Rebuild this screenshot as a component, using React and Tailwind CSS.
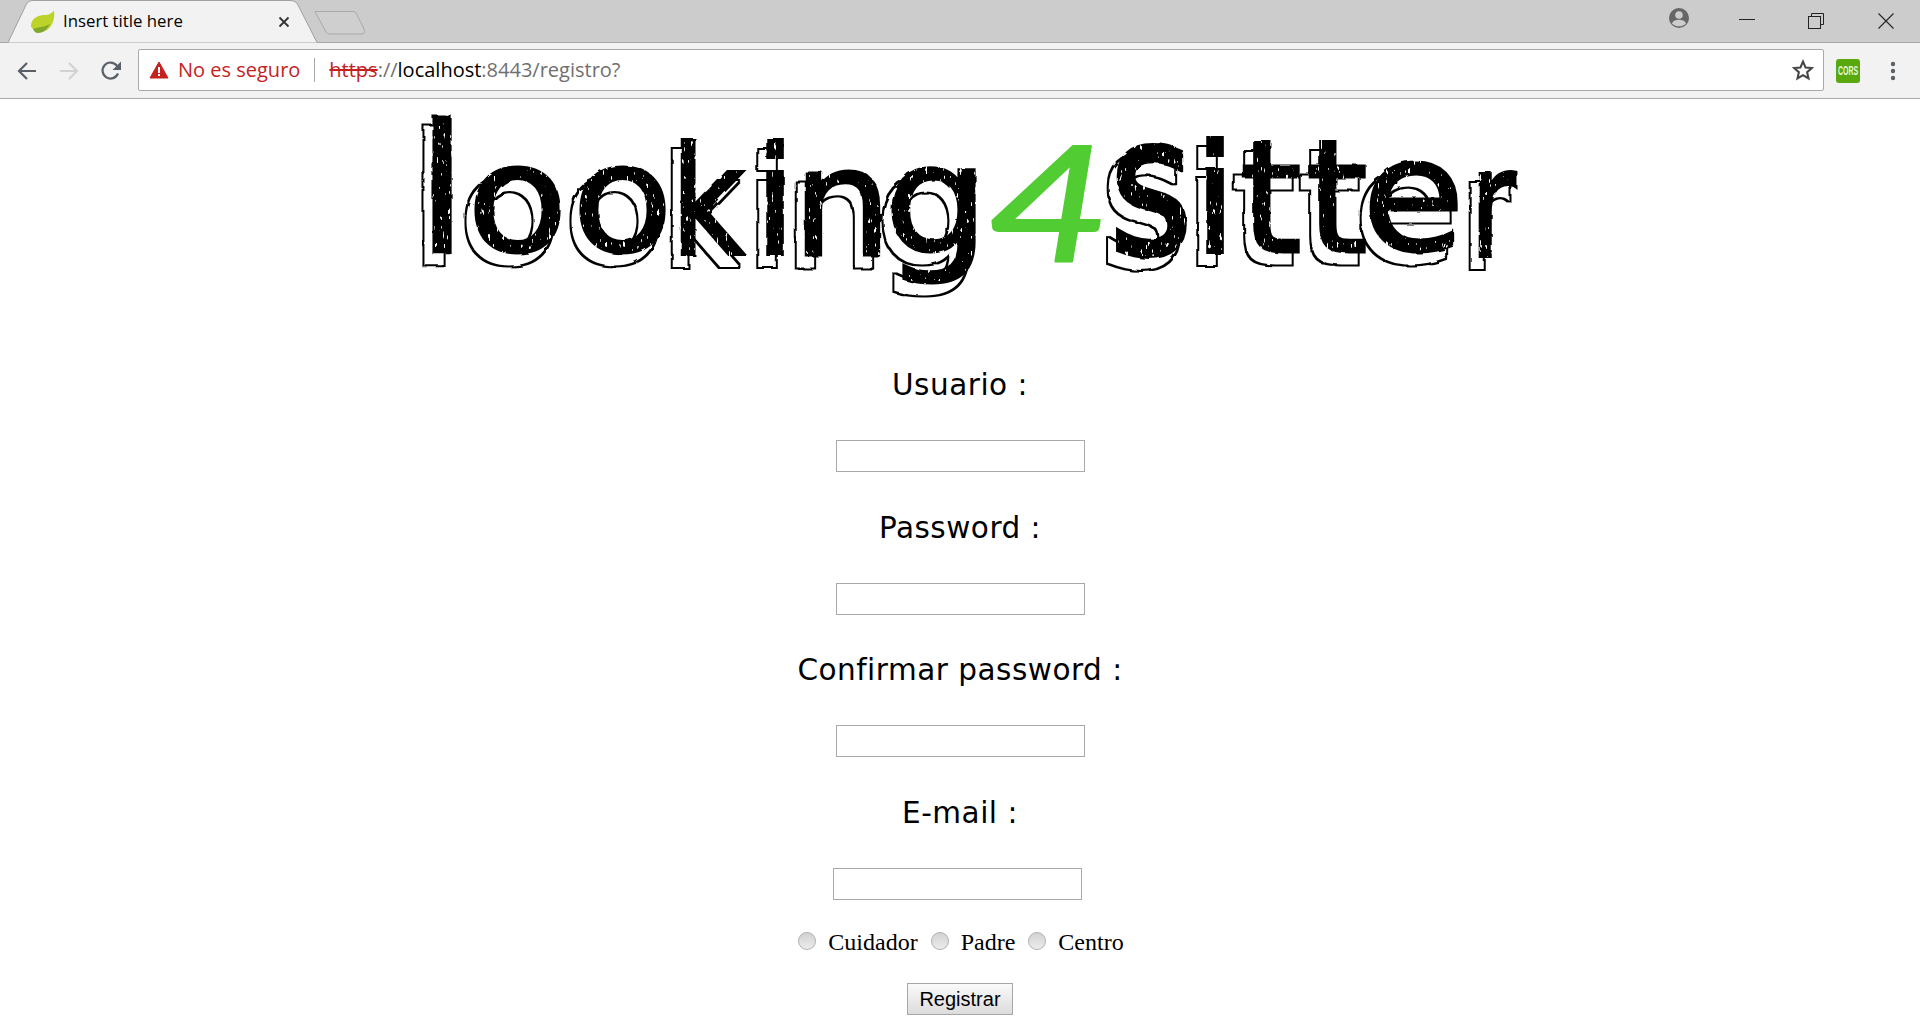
import React from "react";

// Logo letters: x = pen origin, w = advance it gets fitted to, base = baseline, sw = stroke
const logoLetters = [
  { c: "l", x: 417, w: 50, base: 253, size: 178, sw: 3 },
  { c: "o", x: 467, w: 101, base: 251, size: 150, sw: 3 },
  { c: "o", x: 572, w: 101, base: 251, size: 150, sw: 3 },
  { c: "k", x: 671, w: 73, base: 254, size: 149, sw: 4 },
  { c: "i", x: 754, w: 42, base: 254, size: 150, sw: 4 },
  { c: "n", x: 792, w: 100, base: 255, size: 150, sw: 3 },
  { c: "g", x: 884, w: 105, base: 252, size: 150, sw: 3 },
  { c: "s", x: 1110, w: 82, base: 253, size: 190, sw: 6 },
  { c: "i", x: 1194, w: 42, base: 252, size: 150, sw: 4 },
  { c: "t", x: 1240, w: 62, base: 252, size: 157, sw: 3 },
  { c: "t", x: 1306, w: 62, base: 252, size: 157, sw: 3 },
  { c: "e", x: 1362, w: 103, base: 250, size: 157, sw: 3 },
  { c: "r", x: 1470, w: 46, base: 256, size: 150, sw: 4 },
];

const Logo = () => (
  <svg viewBox="400 110 1120 225" className="w-[1120px] h-[225px] block" fontFamily="'DejaVu Sans', sans-serif">
    <defs>
      {/* rough edge, scratches in the ink and a sketched outline offset to the lower left */}
      <filter id="sketch" filterUnits="userSpaceOnUse" x="400" y="110" width="1120" height="225">
        <feTurbulence type="fractalNoise" baseFrequency="0.08" numOctaves="2" seed="4" result="warp" />
        <feDisplacementMap in="SourceAlpha" in2="warp" scale="3" result="ink" />
        <feTurbulence type="fractalNoise" baseFrequency="0.35 0.12" numOctaves="2" seed="9" result="grain" />
        <feColorMatrix in="grain" type="matrix" values="0 0 0 0 1  0 0 0 0 1  0 0 0 0 1  0 0 0 14 -9.9" result="scratch" />
        <feComposite in="scratch" in2="ink" operator="in" result="specks" />
        <feOffset in="ink" dx="-8" dy="11" result="shifted" />
        <feMorphology in="shifted" operator="dilate" radius="2" result="fat" />
        <feComposite in="fat" in2="shifted" operator="out" result="outline" />
        <feMerge>
          <feMergeNode in="outline" />
          <feMergeNode in="ink" />
          <feMergeNode in="specks" />
        </feMerge>
      </filter>
    </defs>
    <g filter="url(#sketch)">
      {logoLetters.map((l, i) => (
        <text key={i} x={l.x} y={l.base} fontSize={l.size} textLength={l.w} lengthAdjust="spacingAndGlyphs" fill="#000" stroke="#000" strokeWidth={l.sw}>
          {l.c}
        </text>
      ))}
    </g>
    <text x="987" y="262" fontSize="162" fontStyle="italic" fontWeight="400" fill="#52cc33" stroke="#52cc33" strokeWidth="2" strokeLinejoin="round" fontFamily="'Lato', sans-serif" textLength="124" lengthAdjust="spacingAndGlyphs">
      4
    </text>
  </svg>
);

const Field = ({ label, className = "", inputClass = "" }) => (
  <div className={`flex flex-col items-center ${className}`}>
    <label className="h-10 leading-[42px] text-[29.5px] tracking-[0.5px] text-black font-['DejaVu_Sans',sans-serif] whitespace-pre">{label}</label>
    <input type="text" className={`mt-9 ml-px w-[249px] h-8 bg-white border border-[#a9a9a9] ${inputClass}`} />
  </div>
);

const Radio = ({ label }) => (
  <label className="flex items-center">
    <input type="radio" name="tipo" className="appearance-none w-[18px] h-[18px] rounded-full border border-[#b0b0b0] bg-gradient-to-b from-[#d2d2d2] to-[#ececec] -mt-[3px]" />
    <span className="ml-3 text-black">{label}</span>
  </label>
);

export default function App() {
  return (
    <div className="w-full h-screen overflow-hidden bg-white flex flex-col">
      {/* Tab strip */}
      <div className="h-[43px] shrink-0 bg-[#cccccc] border-b border-[#a6a6a6] flex items-start relative">
        <div className="relative w-[318px] h-[43px] shrink-0">
          <svg className="absolute inset-0" width="318" height="43" viewBox="0 0 318 43">
            <path d="M8 42.5 L26 5 Q28 .5 33 .5 L290 .5 Q296 .5 298 5 L317 42.5" fill="#f2f2f2" stroke="#a0a0a0" />
          </svg>
          <div className="relative flex items-center h-[43px] pl-[30px] pr-[16px] font-['Open_Sans',sans-serif] text-[16.8px] text-black">
            <svg width="25" height="24" viewBox="0 0 25 24" className="shrink-0">
              <path d="M1 16C1 7 10 5 15 5 19 5 22 3 24 .5 25 8 23 16 17 20 12 23 6 22 3 19 2 18 1 17 1 16Z" fill="#bed32a" />
              <path d="M3 19C7 17 13 18 20 14 17 19 14 23 8 23 5 23 4 21 3 19Z" fill="#7fa82c" />
            </svg>
            <span className="ml-[8px] leading-none">Insert title here</span>
            <svg width="12" height="12" viewBox="0 0 12 12" className="ml-auto mr-[12px]" stroke="#333" strokeWidth="1.8">
              <path d="M1.5 1.5 10.5 10.5M10.5 1.5 1.5 10.5" />
            </svg>
          </div>
        </div>
        <svg width="52" height="26" viewBox="0 0 52 26" className="-ml-[4px] mt-[10px] shrink-0">
          <path d="M1 1.5H39Q41 1.5 42 3L50 19Q52 24 47 24H16Q13 24 12 22L1 1.5Z" fill="#cfcfcf" stroke="#a9a9a9" />
        </svg>
        <div className="ml-auto flex items-start h-full">
          <svg width="22" height="22" viewBox="0 0 22 22" className="mt-[7px] mr-[49px]">
            <circle cx="11" cy="11" r="10" fill="#666" />
            <circle cx="11" cy="8" r="3.8" fill="#ccc" />
            <path d="M4 16.5C5 13.6 8 12.8 11 12.8S17 13.6 18 16.5C16.4 18.4 13.8 19.3 11 19.3S5.6 18.4 4 16.5Z" fill="#ccc" />
          </svg>
          <svg width="16" height="2" viewBox="0 0 16 2" className="mt-[19px] mr-[53px]">
            <rect width="16" height="1" fill="#222" />
          </svg>
          <svg width="16" height="16" viewBox="0 0 16 16" className="mt-[13px] mr-[54px]" fill="none" stroke="#222">
            <path d="M3.5 3.5V.5H15.5V11.5H12.5" />
            <rect x=".5" y="3.5" width="12" height="12" />
          </svg>
          <svg width="16" height="16" viewBox="0 0 16 16" className="mt-[13px] mr-[26px]" stroke="#222" strokeWidth="1.1">
            <path d="M.5 .5 15.5 15.5M15.5 .5 .5 15.5" />
          </svg>
        </div>
      </div>

      {/* Toolbar */}
      <div className="h-[56px] shrink-0 bg-[#f2f2f2] border-b border-[#a9a9a9] flex items-center">
        <svg width="22" height="22" viewBox="0 0 22 22" className="ml-[16px] shrink-0" fill="none" stroke="#5a6067" strokeWidth="2.2">
          <path d="M20 11H3M11 3 3 11 11 19" />
        </svg>
        <svg width="22" height="22" viewBox="0 0 22 22" className="ml-[20px] shrink-0" fill="none" stroke="#d2d2d2" strokeWidth="2.2">
          <path d="M2 11H19M11 3 19 11 11 19" />
        </svg>
        <svg width="22" height="22" viewBox="0 0 22 22" className="ml-[20px] shrink-0" fill="none">
          <path d="M18 13.5A8 8 0 1 1 16.8 5.5L19 8" stroke="#5a6067" strokeWidth="2.2" />
          <path d="M21 1.5V10H12.5Z" fill="#5a6067" />
        </svg>
        <div className="ml-[16px] w-[1686px] h-[42px] -mt-px bg-white border border-[#a9a9a9] rounded-[2px] flex items-center font-['Open_Sans',sans-serif] text-[20px] shrink-0">
          <svg width="20" height="18" viewBox="0 0 20 18" className="ml-[10px] shrink-0">
            <path d="M10 1 19 17H1Z" fill="#c5221f" stroke="#c5221f" strokeWidth="1" strokeLinejoin="round" />
            <rect x="9" y="6" width="2" height="6" fill="#fff" />
            <rect x="9" y="13" width="2" height="2" fill="#fff" />
          </svg>
          <span className="ml-[9px] text-[#c5221f]">No es seguro</span>
          <div className="ml-[14px] w-px h-6 bg-[#a9a9a9]" />
          <span className="ml-[14px] text-[#c5221f] line-through">https</span>
          <span className="text-[#6f6f6f]">://</span>
          <span className="text-black">localhost</span>
          <span className="text-[#6f6f6f]">:8443/registro?</span>
          <svg width="22" height="22" viewBox="0 0 24 24" className="ml-auto mr-[9px]" fill="none" stroke="#444" strokeWidth="2.2">
            <path d="M12 2.8 14.8 9.2 21.7 9.8 16.5 14.4 18 21.2 12 17.6 6 21.2 7.5 14.4 2.3 9.8 9.2 9.2Z" />
          </svg>
        </div>
        <div className="ml-[12px] w-6 h-6 rounded-[3px] bg-[#58a80e] shrink-0">
          <svg width="24" height="24" viewBox="0 0 24 24" fontFamily="'Liberation Sans', sans-serif">
            <text x="2" y="16" fontSize="12" fontWeight="700" fill="#e8f6d8" textLength="20" lengthAdjust="spacingAndGlyphs">CORS</text>
          </svg>
        </div>
        <svg width="6" height="20" viewBox="0 0 6 20" className="ml-[30px] shrink-0" fill="#5a6067">
          <circle cx="3" cy="3" r="2.2" />
          <circle cx="3" cy="10" r="2.2" />
          <circle cx="3" cy="17" r="2.2" />
        </svg>
      </div>

      {/* Page */}
      <div className="flex-1 flex flex-col items-center">
        <div className="mt-[11px]">
          <Logo />
        </div>
        <div className="mt-[29px] flex flex-col items-center gap-[35px]">
          <Field label="Usuario :" />
          <Field label="Password :" />
          <Field label="Confirmar password :" className="-mt-px" />
          <Field label="E-mail :" inputClass="-translate-x-[3px]" />
        </div>
        <div className="mt-[28px] ml-[2px] h-7 flex gap-[13px] items-center text-[24px] leading-7 font-['Liberation_Serif',serif]">
          <Radio label="Cuidador" />
          <Radio label="Padre" />
          <Radio label="Centro" />
        </div>
        <button className="mt-[27px] w-[106px] h-8 border border-[#a6a6a6] bg-gradient-to-b from-[#fafafa] to-[#dcdcdc] text-[20px] leading-none text-black font-['Liberation_Sans',sans-serif]">
          Registrar
        </button>
      </div>
    </div>
  );
}
